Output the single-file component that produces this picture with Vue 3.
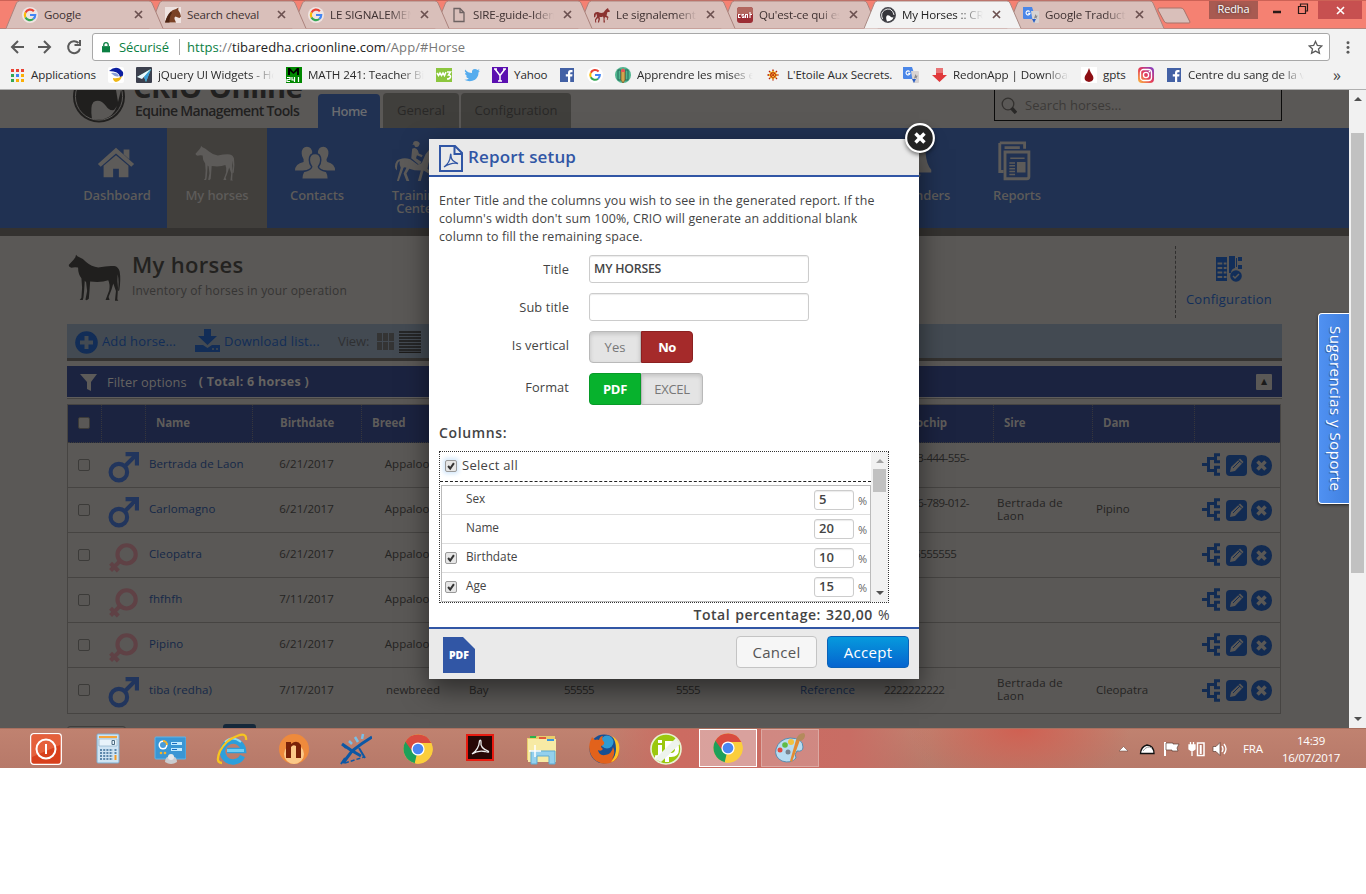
<script setup>
const horsePath = 'M24 2L28 7Q42 12 54 24Q70 38 90 40Q120 34 138 36Q150 38 154 52Q158 75 153 108L149 110Q153 80 148 60Q146 80 149 100L147 135L150 139L140 139L143 110L135 88L130 105L121 128L124 137L112 137L123 108Q126 90 120 78Q100 86 66 82L64 110L62 133L56 138L52 136L57 110L54 84L50 80L48 110L46 130L44 137L35 137L40 130L42 100L40 72Q30 60 30 40Q18 38 10 41L4 38L2 33L16 18L22 10Z'

const translate = '<path d="M0 0h9l4 12H1q-1 0-1-1z" fill="#4a86e8"/><path d="M8 4h7q1 0 1 1v10q0 1-1 1h-5z" fill="#d7d3d3"/><path d="M9 12h4l-2 4z" fill="#2b5fc4"/><path d="M6.600 4.600A2 2 0 1 0 7 6.400H5.200" fill="none" stroke="#fff" stroke-width="1.100"/><path d="M12.500 7l.8 1.800h1.700l-1.400 1.200.6 1.800-1.700-1-1.500 1 .5-1.800" fill="#888"/>'
const google = '<path d="M12.600 3.400A6.100 6.100 0 0 0 2.600 5.100" fill="none" stroke="#ea4335" stroke-width="2.600"/><path d="M2.600 5.100A6.100 6.100 0 0 0 2.600 10.900" fill="none" stroke="#fbbc05" stroke-width="2.600"/><path d="M2.600 10.900A6.100 6.100 0 0 0 11.900 12.700" fill="none" stroke="#34a853" stroke-width="2.600"/><path d="M8 8h6.200A6.100 6.100 0 0 1 11.900 12.700" fill="none" stroke="#4285f4" stroke-width="2.600"/>'
const facebook = '<path d="M1 1h14v14H1z" fill="#4361a5"/><path d="M9 15V9.500H6.800V7.200H9V6Q9 3 11.500 3H13.500v2.200H12Q11.200 5.200 11.200 6v1.200h2.300l-.3 2.300h-2V15z" fill="#fff"/>'
const chrome = '<circle cx="16" cy="16" r="14.500" fill="#fbce3c"/><path d="M16 16L3.500 8.600A14.500 14.500 0 0 0 13 30.200L20 17z" fill="#1da05a"/><path d="M3.400 8.800A14.500 14.500 0 0 1 29.300 10H16L10 18z" fill="#d94b3f"/><path d="M16 16L12.700 30.200A14.500 14.500 0 0 0 29.300 10H16z" fill="#fbce3c"/><circle cx="16" cy="16" r="6.600" fill="#fff"/><circle cx="16" cy="16" r="5.300" fill="#4a86f2"/>'

const icons = {
  google: '<circle cx="8" cy="8" r="8" fill="#fff" opacity=".6"/><g transform="translate(1.300 1.300) scale(.84)">' + google + '</g>',
  googleRound: '<circle cx="8" cy="8" r="8" fill="#fff"/><g transform="translate(1.800 1.800) scale(.78)">' + google + '</g>',
  cheval: '<path d="M0 0h16v16H0z" fill="#fff" opacity=".55"/><path d="M0 15.500Q2 9 5 5.500Q7 2.500 11 2L13.500 0.500L13.200 3L15 6L16 9.500L14.500 11L13 10.500L10.500 9.500Q9 10 9.500 12L11 15.500z" fill="#7a4126"/><path d="M0 15.500Q2 8 6 4.500L7 6Q4 10 4.500 15.500z" fill="#4c2414"/>',
  page: '<path d="M3 1.500h6l4 4v9H3zM9 1.500v4h4" fill="none" stroke="#6d6262" stroke-width="1.300"/>',
  runner: '<path d="M0 7Q1 4.500 4 5Q7 6.500 9.500 5.500Q11 3 12.500 2L14 1L14.500 2.500L16 4L15.300 5L13.500 5L12.500 8.500L14.500 10L13.500 13L12.800 13L13.300 10.800L11 10L10.500 12L11 15.500H9.500L9.500 11L9 9.500Q7 10.500 5.500 9.800L6 12L5 15.500H3.800L4.500 12L4 11L2 13L2.300 15.500H1.200L1 12.500L3 9.500L2.500 7Q1.500 7 1.500 9.500Q.5 11 0 10z" fill="#8b3230"/>',
  quest: '<rect width="16" height="16" rx="3" fill="#9c2d34"/><path d="M0 3Q0 0 3 0H13Q16 0 16 3V7H0z" fill="#b2675f"/><path d="M3.500 7.500h-2v3h2M7 7.500H5v1.500h2v1.500H5M8.500 11V7.500h2V11M13 5v6M15 7.500h-2" fill="none" stroke="#fff" stroke-width="1.100"/>',
  crio: '<circle cx="8" cy="8" r="7.300" fill="#36363b" stroke="#45454b" stroke-width="1.300"/><path d="M7 14.500Q5 9.500 7.500 8.300Q9.500 8 11 10Q12.500 11 13.500 9.500Q13 14 7 14.500z" fill="#fff"/><path d="M2.500 12Q0 6 4.500 3.200Q7 1.500 10 2.200Q13.500 4 14 8" fill="none" stroke="#fff" stroke-width=".9"/>',
  translate,
  apps: '<g fill="#ea4335"><path d="M2 2h3v3H2zM7 2h3v3H7zM12 2h3v3h-3z"/></g><path d="M2 7h3v3H2zM2 12h3v3H2z" fill="#34a853"/><path d="M7 7h3v3H7z" fill="#4285f4"/><path d="M12 7h3v3h-3zM7 12h3v3H7zM12 12h3v3h-3z" fill="#fbaf05"/>',
  jq: '<rect width="16" height="16" rx="1" fill="#3b3f4d"/><path d="M1 10L15 2L10 15L8 10z" fill="#5fcfb2"/><path d="M1 10L15 2L6 12z" fill="#eefaff"/><path d="M15 2L8 10L10 15z" fill="#3d9bd8"/>',
  ball: '<rect width="16" height="16" rx="2" fill="#fff"/><path d="M1 4Q9-3 15 5Q16 10 12 10Q11 4 1 4z" fill="#0c1fa0"/><path d="M3 6Q9 5 11 9Q8 11 3 6z" fill="#8aa0d8"/><path d="M5 11Q10 12 14 9Q13 14 8 15Q5 14 5 11z" fill="#efb714"/>',
  math: '<path d="M0 0h16v16H0z" fill="#080"/><path d="M2 8V1h2l3.500 4L11 1h2v7h-2V4L7.500 7 4 4v4z" fill="#000"/><path d="M1 10.500h3v2H1v2h3M6 10v3h3M8.500 10v5M12.500 10v5" fill="none" stroke="#fff" stroke-width="1.200"/>',
  w3: '<path d="M0 1h16v14H0z" fill="#8cc63e"/><path d="M1 6l1.500 2.500L4 6l1.500 2.500L7 6l1.500 2.500L10 5M11 5h3.500l-2 3Q15 8 14.500 10T11 12" fill="none" stroke="#fff" stroke-width="1.500"/>',
  twitter: '<path d="M1 2.500Q4 6 8 6Q7.500 2 11 2Q12.500 2 13.300 3L15.500 2.300L14.300 4.200L16 3.800L14.500 5.500Q14.500 10 11 12.700Q6 15.500.3 12.800Q3 13 4.800 11.600Q2.500 11.200 2 9.300H3.300Q1 8 1 6L2.400 6.300Q0 4.500 1 2.500z" fill="#55acee"/>',
  yahoo: '<path d="M0 0h16v16H0z" fill="#5a0fb0"/><path d="M3 2l5 6.500L13 2M8 8v6M6 14h4M2 2h3M11 2h3" fill="none" stroke="#fff" stroke-width="1.500"/>',
  facebook,
  pencil: '<circle cx="8" cy="8" r="8" fill="#50b58e"/><path d="M3 3h3v10H3zM10 3h3v10h-3z" fill="none" stroke="#23695a"/><path d="M6 4q2-3 4 0v9l-2 3l-2-3z" fill="#d2a44e" stroke="#795528" stroke-width=".7"/><path d="M6 3q2-3 4 0v2H6z" fill="#e65454"/>',
  star: '<path d="M8 2.500L9.500 5L12 4L11 6.500L13.500 8L11 9.500L12 12L9.500 11L8 13.500L6.500 11L4 12L5 9.500L2.500 8L5 6.500L4 4L6.500 5z" fill="#f2bf27"/><path d="M8 2.500v11M2.500 8h11M4 4l8 8M12 4l-8 8" stroke="#b81b12" stroke-width="1.300" stroke-dasharray="1.500 1"/>',
  redon: '<path d="M5 1h7v7h4L8.500 15L1 8h4z" fill="#e0393b"/><path d="M5 1h7v5H5z" fill="#e97375"/>',
  drop: '<path d="M0 0h16v16H0z" fill="#fff"/><path d="M8 1Q9 5 12 9Q14 14 8 15Q2 14 4 9Q7 5 8 1z" fill="#8d0f14"/>',
  insta: '<defs><linearGradient id="ig" x1="0" y1="1" x2="1" y2="0"><stop offset="0" stop-color="#fdc040"/><stop offset=".5" stop-color="#e23a5c"/><stop offset="1" stop-color="#7a3fd0"/></linearGradient></defs><rect width="16" height="16" rx="4" fill="url(#ig)"/><rect x="2.500" y="2.500" width="11" height="11" rx="3" fill="none" stroke="#fff" stroke-width="1.300"/><circle cx="8" cy="8" r="2.600" fill="none" stroke="#fff" stroke-width="1.300"/><circle cx="11.400" cy="4.600" r=".8" fill="#fff"/>'
}

const tabs = [
  { icon: 'google', text: 'Google' },
  { icon: 'cheval', text: 'Search cheval' },
  { icon: 'google', text: 'LE SIGNALEMENT' },
  { icon: 'page', text: 'SIRE-guide-Identif' },
  { icon: 'runner', text: 'Le signalement d' },
  { icon: 'quest', text: "Qu'est-ce qui est" },
  { icon: 'crio', text: 'My Horses :: CRIO', active: true },
  { icon: 'translate', text: 'Google Traduction' }
]

const bookmarks = [
  { icon: 'apps', text: 'Applications', w: 99 },
  { icon: 'ball', w: 28 },
  { icon: 'jq', text: 'jQuery UI Widgets - Home', w: 150, fade: true },
  { icon: 'math', text: 'MATH 241: Teacher Bingo', w: 150, fade: true },
  { icon: 'w3', w: 28 },
  { icon: 'twitter', w: 28 },
  { icon: 'yahoo', text: 'Yahoo', w: 67 },
  { icon: 'facebook', w: 28 },
  { icon: 'googleRound', w: 28 },
  { icon: 'pencil', text: 'Apprendre les mises en page', w: 150, fade: true },
  { icon: 'star', text: "L'Etoile Aux Secrets.", w: 138 },
  { icon: 'translate', w: 28 },
  { icon: 'redon', text: 'RedonApp | Download', w: 150, fade: true },
  { icon: 'drop', text: 'gpts', w: 57 },
  { icon: 'insta', w: 28 },
  { icon: 'facebook', text: 'Centre du sang de la ville', w: 150, fade: true }
]

const nav = {
  home: '<path d="M3 24L22 7L41 24L38 27L22 13L6 27L3 24zM9 26L22 15L35 26V38H25V29H19V38H9zM30 9h6v10l-6-5z"/>',
  people: '<path d="M7 13Q7 6 12.500 6Q18 6 18 13Q18 16 16 19Q17 22 21 24L17 31H0Q0 24 9 22Q9 20 9 19Q7 16 7 13zM24 13Q24 6 29.500 6Q35 6 35 13Q35 16 33 19Q33 22 34 22Q42 24 42 31H25L21 24Q26 22 26 19Q24 16 24 13z"/><path d="M15 20Q15 13 21 13Q27 13 27 20Q27 24 24.500 27Q25 30 33 32Q35 35 35 40H7Q7 35 9 32Q17 30 17.500 27Q15 24 15 20z" stroke="#203152" stroke-width="1.500"/>',
  rider: '<path d="M19 3Q19 0 22 0Q25 0 26 3L25 5Q24 7 21 6L20 4H18z"/><path d="M18 8Q22 6 24 10L25 13L29 15L28 17L23 15L22 18L28 22L25 25L23 23L17 18z"/><path d="M5 19Q10 17 16 19L24 25L28 23L32 14L36 9L38 11L43 15L42 18L37 17L35 24L34 29L40 34L37 41L35 41L37 35L30 31L27 42H24L27 31Q20 31 15 29L12 34L15 42H12L9 34L12 28Q10 27 9 28L4 42H2L6 28Q4 24 5 21Q2 22 2 31Q0 29 0 27Q0 20 5 19z"/>',
  bell: '<path d="M22 0q10 0 10 12q1 13 6 18v3H5v-3q5-5 6-18Q12 0 22 0zM17 35h10q-2 5-5 5t-5-5z"/>',
  reports: '<path d="M5 2h26v6M5 2v30h4M10 7h16" fill="none" stroke="#5d5b59" stroke-width="3"/><path d="M10.500 11.500h25v26q0 2-2 2h-23z" fill="none" stroke="#5d5b59" stroke-width="3"/><path d="M16 18h15M15 23h6M15 26h6M15 29h6M15 32h6M15 35h6" stroke="#5d5b59" stroke-width="1.500" fill="none"/><path d="M23 22h9v11h-9z"/>'
}

const navItems = [
  { text: 'Dashboard', icon: nav.home },
  { text: 'My horses', horse: true },
  { text: 'Contacts', icon: nav.people },
  { text: 'Training Center', icon: nav.rider },
  { text: '', icon: '' }, { text: '', icon: '' }, { text: '', icon: '' }, { text: '', icon: '' },
  { text: 'Reminders', icon: nav.bell },
  { text: 'Reports', icon: nav.reports }
]

const heads = ['', '', 'Name', 'Birthdate', 'Breed', '', '', '', '', 'Microchip', 'Sire', 'Dam', '']
const horses = [
  { sex: 'm', name: 'Bertrada de Laon', date: '6/21/2017', breed: 'Appaloosa', chip: '222-333-444-555-666', sire: '', dam: '' },
  { sex: 'm', name: 'Carlomagno', date: '6/21/2017', breed: 'Appaloosa', chip: '123-456-789-012-345', sire: 'Bertrada de Laon', dam: 'Pipino' },
  { sex: 'f', name: 'Cleopatra', date: '6/21/2017', breed: 'Appaloosa', chip: '555555555555', sire: '', dam: '' },
  { sex: 'f', name: 'fhfhfh', date: '7/11/2017', breed: 'Appaloosa', chip: '', sire: '', dam: '' },
  { sex: 'f', name: 'Pipino', date: '6/21/2017', breed: 'Appaloosa', chip: '', sire: '', dam: '' },
  { sex: 'm', name: 'tiba (redha)', date: '7/17/2017', breed: 'newbreed', color: 'Bay', a: '55555', b: '5555', ref: 'Reference', chip: '2222222222', sire: 'Bertrada de Laon', dam: 'Cleopatra' }
]
const columns = [
  { name: 'Sex', pct: 5 },
  { name: 'Name', pct: 20 },
  { name: 'Birthdate', pct: 10, check: true },
  { name: 'Age', pct: 15, check: true }
]

const taskbar = [
  '<rect x=".7" y=".7" width="30.600" height="30.600" rx="3" fill="#d8401c" stroke="#fff" stroke-width="1.300"/><path d="M2 2h28v10L2 24z" fill="#ef7650" opacity=".6"/><circle cx="16" cy="16" r="9.500" fill="none" stroke="#fff" stroke-width="2"/><path d="M16 11v10" stroke="#fff" stroke-width="2"/>',
  '<rect x="5" y="1" width="22" height="29" rx="1" fill="#cfe4f3" stroke="#7daed0"/><path d="M7 3h18v2H7z" fill="#f5a63c"/><path d="M7 6h18v7H7z" fill="#e8f3fa" stroke="#80a9c5" stroke-width=".6"/><path d="M20 7.500h2.500v4H20z" fill="none" stroke="#4a6b82"/><path d="M8 17h13M8 20h13M8 23h13M8 26h13" stroke="#5b87ab" stroke-width="2" stroke-dasharray="2 1.200"/><path d="M22.500 17h2M22.500 20h2" stroke="#5b87ab" stroke-width="2"/><path d="M22.500 22h2v5h-2z" fill="#f39a24"/>',
  '<rect x="1" y="4" width="31" height="22" rx="1" fill="#3a96d4" stroke="#5fb4e8"/><circle cx="9" cy="12" r="4.500" fill="#fff"/><path d="M9 12V7a5 5 0 0 1 5 5z" fill="#f5b42c"/><circle cx="9" cy="12" r="3" fill="#4a9cd9"/><path d="M17 9h11v3H17zM17 15h11v3H17z" fill="#bfeaff"/><path d="M18 10h5v1h-5zM18 16h5v1h-5z" fill="#1a6cc0"/><circle cx="7" cy="20" r="1.300" fill="#f5b42c"/><circle cx="11" cy="20" r="1.300" fill="#f5b42c"/><path d="M11 29q0-6 6-6t6 6q-6 4-12 0z" fill="#c9ccd0"/><circle cx="17" cy="24" r="3" fill="#e5e7e9"/>',
  '<path d="M26.500 23A10.500 10.500 0 1 1 27.500 17.500H11" fill="none" stroke="#2c9fdc" stroke-width="5.500"/><path d="M9 9Q16 2 25 9" fill="none" stroke="#8fdcf7" stroke-width="2"/><path d="M11 17.500h17" stroke="#6fcdf3" stroke-width="3"/><path d="M6 30Q-1 30 4 18Q10 7 21 3Q31-1 30 7" fill="none" stroke="#f7c520" stroke-width="2.300"/>',
  '<circle cx="16" cy="16" r="15" fill="#ee8a3c"/><circle cx="16" cy="21" r="10" fill="#fbc988"/><path d="M8 9h5v2q6-5 10 1v13h-5V13q-3-2-5 1v11H8z" fill="#7a2208"/>',
  '<path d="M2 11Q10 17 21 23M3 30L12 18Q22 10 32 4" fill="none" stroke="#0d58a5" stroke-width="3"/><path d="M3 12l3 3M1 31l4-6M19 15l6 10" stroke="#0d58a5" stroke-width="2" fill="none"/><path d="M5 30L24 24" stroke="#0d58a5" stroke-width="1.500" stroke-dasharray="4 2"/><path d="M15 4l3 5M23 1l-1 5M9 8l3 3" stroke="#79bfe8" stroke-width="2.500"/>',
  chrome,
  '<path d="M2 1h28v27H2z" fill="#e81b10"/><path d="M4 3h24v23H4z" fill="#270806"/><path d="M8 21Q15 16 15.500 8Q17 6 17 9Q16 15 24 18Q26 20 21 18.500Q14 17 8 21z" fill="none" stroke="#eee" stroke-width="1.300"/>',
  '<path d="M1 5h8l2-2h18v24H1z" fill="#e9ce6c"/><path d="M2 6h28v23H2z" fill="#f7eaa4"/><path d="M4 3h6v2H4z" fill="#28b34b"/><path d="M13 4h7v2h-7z" fill="#e25a3c"/><path d="M21 6h7v2h-7z" fill="#3a97df"/><path d="M5 18h24v13h-6v-8H11v8H5z" fill="#94d0ed" stroke="#5eabd1"/><path d="M9 12v12M3 18h12" stroke="#fff" stroke-width="1.500"/>',
  '<circle cx="16" cy="16" r="14.500" fill="#174f93"/><circle cx="19" cy="9" r="6.500" fill="#2f9bd2"/><path d="M2 9L4 4L7 7Q9 6 11 7Q12 3 15 3Q13 6 16 9Q17 12 13 13Q13 15 15 16Q13 19 10 17Q11 23 17 22Q24 21 25 14Q28 20 24 26Q29 22 30 14Q34 26 22 30Q9 33 3 22Q0 15 2 9z" fill="#e2621b"/><path d="M24 3Q33 8 31 18Q30 27 23 29Q28 23 28 16Q28 8 24 3z" fill="#fcc527"/>',
  '<circle cx="16" cy="16" r="15" fill="#9bc80e" stroke="#e9f2d3" stroke-width="1.600"/><path d="M10 7v3M10 12v9q0 4-5 3M17 29V10h4q6 0 6 6t-6 6h-4" fill="none" stroke="#fff" stroke-width="4"/><path d="M5 26L26 5L30 11L11 29z" fill="#eef3ed"/>',
  chrome,
  '<path d="M16 6Q29 6 29 15Q29 20 23 19Q20 22 22 26Q17 32 8 29Q0 25 2 17Q5 7 16 6z" fill="#b8dcf1" stroke="#578cb0"/><circle cx="17" cy="10" r="3" fill="#f1c23e"/><circle cx="11" cy="13" r="2.800" fill="#60bb46"/><circle cx="6" cy="18" r="2.500" fill="#e24b3e"/><circle cx="14" cy="20" r="2.500" fill="#77848f"/><path d="M26 8L18 30L16 29L22 8z" fill="#e28b33"/><path d="M22 8Q24 1 30 1Q33 5 27 9z" fill="#b48a5c"/>'
]
</script>

<template>
  <div class="screen">
    <div class="titlebar">
      <div v-for="(t, i) in tabs" :key="i" class="tab" :class="{ active: t.active }" :style="{ zIndex: t.active ? 20 : 10 - i }">
        <svg class="tab-shape" viewBox="0 0 158 29"><path d="M0 28.500L10.500 3Q11.500 1 13.500 1H143Q145 1 146 3L157 28.500" /></svg>
        <svg class="i16" viewBox="0 0 16 16" v-html="icons[t.icon]"></svg>
        <span class="tab-text">{{ t.text }}</span>
        <svg class="tab-x" viewBox="0 0 9 9"><path d="M1 1l7 7M8 1l-7 7" /></svg>
      </div>
      <svg class="newtab" viewBox="0 0 36 18"><path d="M2 1H24Q26 1 27 3L33 15Q33 16 32 16H10Q8 16 7 14L1 3Q1 1 2 1z" /></svg>
      <div class="win">
        <span class="user">Redha</span>
        <svg class="wmin" viewBox="0 0 48 19"><path d="M3 12h8" stroke-width="2.500" /><path d="M28.500 6.500h7v7h-7zM30.500 6v-2h7v7h-2" fill="none" stroke-width="1.200" /></svg>
        <span class="wclose"><svg viewBox="0 0 9 9"><path d="M1 1l7 7M8 1l-7 7" /></svg></span>
      </div>
    </div>

    <div class="urlbar">
      <svg class="nav-arrows" viewBox="0 0 74 16">
        <path d="M14 8H2M8 2L2 8l6 6M28 8h12M34 2l6 6-6 6M68.500 4A6 6 0 1 0 70 9.500M70 1v5h-5.500" />
      </svg>
      <div class="omni">
        <svg class="lock" viewBox="0 0 9 12"><path d="M0 5h9v7H0z" /><path d="M2 5V3.500Q2 1 4.500 1T7 3.500V5" fill="none" stroke="#0b8043" stroke-width="1.500" /></svg>
        <span class="secure">Sécurisé</span>
        <span class="sep"></span>
        <span class="url"><span class="green">https</span>://<span class="dark">tibaredha.crioonline.com</span>/App/#Horse</span>
        <svg class="fav" viewBox="0 0 16 16"><path d="M8 1.500l2 4.300 4.700.5-3.500 3.200 1 4.700L8 11.800l-4.200 2.400 1-4.700L1.300 6.300 6 5.800z" /></svg>
      </div>
      <svg class="dots" viewBox="0 0 4 14"><circle cx="2" cy="2" r="1.600" /><circle cx="2" cy="7" r="1.600" /><circle cx="2" cy="12" r="1.600" /></svg>
    </div>

    <div class="bookmarks">
      <div v-for="(b, i) in bookmarks" :key="i" class="bm" :style="{ width: b.w + 'px' }">
        <svg class="i16" viewBox="0 0 16 16" v-html="icons[b.icon]"></svg>
        <span v-if="b.text" class="bm-text" :class="{ fade: b.fade }">{{ b.text }}</span>
      </div>
      <span class="more">»</span>
    </div>

    <div class="viewport">
      <div class="page">
        <header class="head">
          <svg class="logo" viewBox="0 0 54 34">
            <circle cx="28" cy="6.500" r="26" fill="#201f1e" />
            <circle cx="28" cy="6.500" r="23.600" fill="none" stroke="#5a5856" stroke-width="1" />
            <path d="M21 29Q19 16 22.500 12Q29 8 35 16Q38 21 43 20L46 16Q42 27 33 29Q26 30 21 29z" fill="#5a5856" />
            <path d="M45 0L47 12L50 0z" fill="#5a5856" />
          </svg>
          <div class="brand"><b>CRIO Online</b><span>Equine Management Tools</span></div>
          <div class="ptab home">Home</div>
          <div class="ptab general">General</div>
          <div class="ptab conf">Configuration</div>
          <div class="search">
            <svg viewBox="0 0 16 17"><circle cx="7" cy="7" r="5.800" fill="none" stroke="#33312f" stroke-width="1.300" /><path d="M10.500 11L15 16" stroke="#292827" stroke-width="3.500" /></svg>
            Search horses...
          </div>
        </header>
        <nav class="nav">
          <div v-for="(n, i) in navItems" :key="i" class="nitem" :class="{ sel: n.horse }">
            <svg v-if="n.horse" class="nhorse" viewBox="0 0 158 140"><path :d="horsePath" /></svg>
            <svg v-else class="nicon" viewBox="0 0 44 44" v-html="n.icon"></svg>
            <span>{{ n.text }}</span>
          </div>
        </nav>
        <section class="title">
          <svg class="thorse" viewBox="0 0 158 140"><path :d="horsePath" /></svg>
          <div class="ttext"><h1>My horses</h1><p>Inventory of horses in your operation</p></div>
          <div class="config">
            <svg viewBox="0 0 26 26"><path d="M0 1h11v24H0zM22 1h4v4h-4zM22 9h4v4h-4z" /><path d="M1.500 7.500h9M1.500 12h9M1.500 16.500h9M1.500 21h9" stroke="#5a5856" stroke-width="2" /><path d="M7 5v19" stroke="#122e59" stroke-width="1.500" /><path d="M13 0h6v12q-4 1-4 5h-2zM20 2h1v9h-1z" /><circle cx="20" cy="20" r="5.800" /><path d="M17 20l2 2 4-4" stroke="#5a5856" stroke-width="1.500" fill="none" /></svg>
            <span>Configuration</span>
          </div>
        </section>
        <div class="tools">
          <svg class="plus" viewBox="0 0 23 23"><circle cx="11.500" cy="11.500" r="11.300" /><path d="M11.500 5v13M5 11.500h13" stroke="#434a52" stroke-width="4" /></svg>
          <span class="add">Add horse...</span>
          <svg class="down" viewBox="0 0 25 23"><path d="M9 0h7v7h6l-9.500 9L3 7h6z" /><path d="M0 16h8l4.500 3 4.500-3h8v7H0z" /><path d="M17 20h2M21 20h2" stroke="#434a52" stroke-width="1.500" /></svg>
          <span class="dl">Download list...</span>
          <span class="view">View:</span>
          <svg class="gridi" viewBox="0 0 17 17"><path d="M0 0h5v8H0zM6 0h5v8H6zM12 0h5v8h-5zM0 9h5v8H0zM6 9h5v8H6zM12 9h5v8h-5z" /></svg>
          <svg class="lines" viewBox="0 0 22 22"><path d="M0 1h22M0 4h22M0 7h22M0 10h22M0 13h22M0 16h22M0 19h22M0 21.500h22" stroke="#1c1b1a" stroke-width="1.400" /></svg>
        </div>
        <div class="filter">
          <svg viewBox="0 0 17 18"><path d="M0 0h17l-6 8v9l-4-2V8z" /></svg>
          <span>Filter options</span><b>( Total: 6 horses )</b>
          <i>▲</i>
        </div>
        <div class="table">
          <div class="row hrow">
            <div v-for="(h, i) in heads" :key="i" :class="{ ck: i === 0 }"><span v-if="i === 0" class="box"></span>{{ h }}</div>
          </div>
          <div v-for="h in horses" :key="h.name" class="row">
            <div class="ck"><span class="box"></span></div>
            <div class="sex">
              <svg v-if="h.sex === 'm'" viewBox="0 0 30 30"><path d="M16.500 13.500L26 4M17 2h11v11" fill="none" stroke="#21355d" stroke-width="4" /><circle cx="10.500" cy="19.500" r="8" fill="none" stroke="#21355d" stroke-width="4" /></svg>
              <svg v-else viewBox="0 0 30 30"><path d="M12 18L2.500 27.500M2.500 20.500L10 28" fill="none" stroke="#5f4145" stroke-width="4" /><circle cx="18" cy="12" r="8.800" fill="none" stroke="#5f4145" stroke-width="4" /></svg>
            </div>
            <div class="link">{{ h.name }}</div>
            <div class="mid">{{ h.date }}</div>
            <div class="mid">{{ h.breed }}</div>
            <div>{{ h.color }}</div>
            <div class="num">{{ h.a }}</div>
            <div class="num">{{ h.b }}</div>
            <div class="link">{{ h.ref }}</div>
            <div class="num chip">{{ h.chip }}</div>
            <div class="sire">{{ h.sire }}</div>
            <div>{{ h.dam }}</div>
            <div class="acts">
              <svg class="tree" viewBox="0 0 18 23"><path d="M0 11.500h6M12 5.500H6.500v12H12M18 1.800h-4.500v7H18M18 14.200h-4.500v7H18" fill="none" stroke="#122b52" stroke-width="3" /></svg>
              <svg class="edit" viewBox="0 0 21 21"><rect width="21" height="21" rx="4" /><path d="M4 17l1-5L14 3.500l3.500 3.500L9 16z" fill="#5a5856" /><path d="M7 13l7-7M12.500 5l3.500 3.500" stroke="#122b52" /></svg>
              <svg class="del" viewBox="0 0 21 21"><circle cx="10.500" cy="10.500" r="10.500" /><path d="M6.500 6.500l8 8M14.500 6.500l-8 8" stroke="#5a5856" stroke-width="3.500" /></svg>
            </div>
          </div>
        </div>
        <div class="pager"><span class="p1"></span><span class="p2"></span></div>

        <div class="modal">
          <div class="mhead">
            <svg viewBox="0 0 24 28"><path d="M1 1h15l7 7v18H1zM15.500 1v8H23" fill="none" stroke="#3156a5" stroke-width="2" /><path d="M5 22Q11 18 11.500 10Q12 8 12 11Q12 16 19 18.500Q13 17 5 22z" fill="none" stroke="#3156a5" stroke-width="1.300" /></svg>
            <h2>Report setup</h2>
          </div>
          <div class="mbody">
            <p class="intro"><span>Enter Title and the columns you wish to see in the generated report. If the</span><span>column's width don't sum 100%, CRIO will generate an additional blank</span><span>column to fill the remaining space.</span></p>
            <div class="field"><label>Title</label><div class="inp">MY HORSES</div></div>
            <div class="field"><label>Sub title</label><div class="inp"></div></div>
            <div class="field tog"><label>Is vertical</label><div class="switch"><span class="off l">Yes</span><span class="no">No</span></div></div>
            <div class="field tog"><label>Format</label><div class="switch"><span class="pdf">PDF</span><span class="off r">EXCEL</span></div></div>
            <h3>Columns:</h3>
            <div class="list">
              <div class="lmain">
                <div class="all"><span class="cbx glow"><svg viewBox="0 0 12 12"><path d="M2.500 6l2.500 3 4.500-6.500" /></svg></span>Select all</div>
                <div class="lrows">
                  <div v-for="c in columns" :key="c.name" class="lrow">
                    <span v-if="c.check" class="cbx"><svg viewBox="0 0 12 12"><path d="M2.500 6l2.500 3 4.500-6.500" /></svg></span>
                    <span v-else class="cgap"></span>
                    <span class="cname">{{ c.name }}</span>
                    <span class="pct">{{ c.pct }}</span><span class="ps">%</span>
                  </div>
                </div>
              </div>
              <div class="lscroll"><i class="up dimmed"></i><b></b><i class="dn"></i></div>
            </div>
            <div class="total"><b>Total percentage: 320,00</b> %</div>
          </div>
          <div class="mfoot">
            <svg viewBox="0 0 32 36"><path d="M0 0h20l12 12v24H0z" /><text x="16" y="21.500">PDF</text></svg>
            <span class="btn cancel">Cancel</span><span class="btn accept">Accept</span>
          </div>
          <svg class="close" viewBox="0 0 30 30"><circle cx="15" cy="15" r="13" fill="#222" stroke="#fff" stroke-width="2" /><path d="M10.800 10.800l8.400 8.400M19.200 10.800l-8.400 8.400" stroke="#fff" stroke-width="3.200" /></svg>
        </div>
        <div class="support">Sugerencias y Soporte</div>
      </div>
      <div class="scroll"><i class="up"></i><b></b><i class="dn"></i></div>
    </div>

    <div class="taskbar">
      <div v-for="(t, i) in taskbar" :key="i" class="task" :class="{ on: i === 11, half: i === 12 }"><svg viewBox="0 0 32 32" v-html="t"></svg></div>
      <div class="tray">
        <svg viewBox="0 0 112 20">
          <path d="M0 12L4.500 7.500L9 12z" fill="#fff" stroke="#5c4038" stroke-width=".5" />
          <path d="M21.500 14.500Q22 7.500 28 6Q35 7 35 14.500z" fill="#fff" stroke="#111" stroke-width="1.300" /><path d="M24 12q4-6 9-3" stroke="#999" fill="none" />
          <path d="M46 3v14" stroke="#fff" stroke-width="2" /><path d="M47 4h7v1h6l-2 4 1 3h-6v-1h-6z" fill="#fff" stroke="#5c4038" stroke-width=".7" />
          <path d="M70 6h6v4q-3 3-6 0zM71.500 3v3M74.500 3v3M73 11v6" fill="#fff" stroke="#fff" stroke-width="1.300" /><rect x="78.500" y="4" width="6.500" height="12.500" fill="#b87766" stroke="#fff" stroke-width="1.500" /><path d="M80.700 6h2v9h-2z" fill="#fff" />
          <path d="M94 7.500h3l4-4v13l-4-4h-3z" fill="#fff" stroke="#5c4038" stroke-width=".7" /><path d="M103 7q2 3 0 6M105 5q4 5 0 10" fill="none" stroke="#fff" stroke-width="1.300" />
        </svg>
        <span class="lang">FRA</span>
        <span class="clock">14:39<br />16/07/2017</span>
      </div>
    </div>
  </div>
</template>

<style>
body { background: #fff; }
</style>
<style scoped>
* { box-sizing: border-box; }
.screen { width: 1366px; height: 894px; overflow: hidden; font-family: "Open Sans", "Noto Sans", sans-serif; background: #fff; white-space: nowrap; }
.i16 { width: 16px; height: 16px; flex: none; }

.titlebar { height: 29px; background: #f58172; border-top: 1px solid #cd6256; border-bottom: 1px solid #b5837c; display: flex; padding-left: 6px; position: relative; }
.tab { width: 157px; height: 29px; margin: -1px -14px 0 0; flex: none; position: relative; display: flex; align-items: center; padding-left: 16px; }
.tab-shape { position: absolute; left: 0; top: 0; width: 158px; height: 29px; }
.tab-shape path { fill: #d9bfba; stroke: #ab837d; stroke-width: 1; }
.active .tab-shape path { fill: #f2f2f2; stroke: #a98983; }
.tab .i16, .tab-text, .tab-x { position: relative; }
.tab-text { width: 83px; margin-left: 6px; font-size: 11.600px; letter-spacing: -.15px; color: #3f3232; overflow: hidden; -webkit-mask-image: linear-gradient(90deg, #000 60px, transparent 81px); }
.tab:first-child .tab-text, .tab:nth-child(2) .tab-text { -webkit-mask-image: none; }
.active .tab-text { color: #222; -webkit-mask-image: linear-gradient(90deg, #000 54px, transparent 81px); }
.tab-x { width: 9px; height: 9px; margin-left: 7px; }
.tab-x path { stroke: #6c5150; stroke-width: 1.700; }
.newtab { width: 36px; height: 18px; margin: 6px 0 0 7px; position: relative; z-index: 30; }
.newtab path { fill: #d9bfba; stroke: #a7736b; }
.win { margin-left: auto; display: flex; height: 18px; }
.user { width: 49px; background: #a85a51; color: #fff; font-size: 11px; line-height: 16px; text-align: center; text-shadow: 0 0 3px #333; letter-spacing: -.1px; }
.wmin { width: 48px; height: 19px; margin-left: 12px; margin-top: -1px; }
.wmin path { stroke: #2a1a18; }
.wclose { width: 44px; margin-right: 4px; background: #c75050; display: flex; align-items: center; justify-content: center; }
.wclose svg { width: 9px; }
.wclose path { stroke: #fff; stroke-width: 1.600; }

.urlbar { height: 36px; background: #f2f2f2; display: flex; align-items: center; padding-left: 10px; }
.nav-arrows { width: 74px; height: 16px; flex: none; }
.nav-arrows path { fill: none; stroke: #5a5a5a; stroke-width: 2; }
.omni { margin-left: 8px; width: 1238px; height: 28px; background: #fff; border: 1px solid #a8a8a8; border-radius: 3px; display: flex; align-items: center; font-size: 13px; padding-left: 9px; }
.lock { width: 8px; height: 12px; fill: #0b8043; }
.secure { color: #0b8043; margin-left: 9px; width: 52px; letter-spacing: -.1px; }
.sep { width: 1px; height: 16px; background: #aaa; margin: 0 7px 0 8px; }
.url { color: #777; letter-spacing: .08px; }
.green { color: #0b8043; }
.dark { color: #222; }
.fav { width: 15px; height: 15px; margin-left: auto; margin-right: 6px; }
.fav path { fill: none; stroke: #5a5a5a; stroke-width: 1.400; }
.dots { width: 4px; height: 13px; margin-left: 16px; fill: #5a5a5a; }
.bookmarks { height: 25px; background: #f2f2f2; border-bottom: 1px solid #b0b0b0; display: flex; align-items: center; padding-left: 9px; font-size: 11.600px; color: #2b2b2b; padding-bottom: 5px; }
.bm { display: flex; align-items: center; flex: none; }
.bm-text { margin-left: 6px; letter-spacing: -.1px; }
.fade { width: 117px; overflow: hidden; -webkit-mask-image: linear-gradient(90deg, #000 92px, transparent 116px); }
.more { margin-left: 17px; font-size: 16px; line-height: 16px; color: #444; }

.viewport { display: flex; height: 638px; }
.page { width: 1349px; height: 638px; position: relative; overflow: hidden; background: #5a5856; }
.head { height: 38px; display: flex; padding-left: 71px; }
.logo { width: 54px; height: 34px; }
.brand { width: 180px; margin-left: 8px; margin-top: -23px; display: flex; flex-direction: column; color: #21201f; }
.brand b { font-size: 29px; line-height: 39px; letter-spacing: -.4px; height: 35px; }
.brand span { font-size: 14px; line-height: 18px; margin-left: 2px; font-weight: 600; letter-spacing: -.65px; }
.ptab { border-radius: 4px 4px 0 0; text-align: center; font-size: 13px; letter-spacing: 0; }
.home { margin-left: 5px; margin-top: 4px; width: 62px; background: #203152; color: #6a6c70; font-weight: 600; line-height: 35px; letter-spacing: -.5px; }
.general { margin-left: 3px; margin-top: 3px; width: 76px; background: #403f3c; color: #292827; line-height: 34px; }
.conf { margin-left: 2px; margin-top: 3px; width: 110px; background: #403f3c; color: #292827; line-height: 34px; }
.search { margin-left: 423px; width: 288px; height: 31px; border: 1px solid #0b0b0b; border-top: 0; display: flex; align-items: center; color: #3c3a38; font-size: 13px; letter-spacing: .05px; padding-left: 6px; }
.search svg { width: 16px; height: 17px; margin-right: 8px; }
.nav { height: 108px; border-bottom: 8px solid #343230; background: #203152; display: flex; padding-left: 67px; }
.nitem { width: 100px; height: 100px; display: flex; flex-direction: column; align-items: center; color: #5d5b59; fill: #5d5b59; font-size: 13px; line-height: 13px; letter-spacing: -.15px; white-space: normal; text-align: center; font-weight: 600; padding-top: 13px; }
.nitem > span { max-width: 70px; }
.sel { background: #413f3c; }
.nicon { width: 42px; height: 42px; margin: 0 2px 6px 0; }
.nhorse { width: 40px; height: 36px; margin: 4px 0 8px -4px; }
.title { height: 88px; display: flex; padding: 10px 67px 0 68px; }
.thorse { width: 53px; height: 47px; margin-top: 8px; fill: #201f1e; }
.ttext { margin-left: 11px; }
h1 { font-size: 22px; line-height: 30px; margin: 3px 0 0; color: #232220; font-weight: 600; letter-spacing: .3px; }
.ttext p { margin: 3px 0 0; font-size: 12px; line-height: 18px; color: #363534; letter-spacing: .18px; }
.config { margin-left: auto; width: 107px; height: 72px; border-left: 1px dashed #302f2e; display: flex; flex-direction: column; align-items: center; color: #122e59; font-size: 13px; letter-spacing: .25px; padding-top: 10px; }
.config svg { width: 26px; height: 26px; fill: #122e59; margin-bottom: 8px; }
.config span { line-height: 18px; }
.tools { margin-left: 67px; width: 1215px; height: 37px; background: #434a52; border-bottom: 3px solid #343230; display: flex; align-items: center; padding-left: 8px; color: #122d57; font-size: 13px; }
.tools svg { flex: none; fill: #122d57; }
.plus { width: 23px; height: 23px; margin-top: 3px; }
.add { margin-left: 4px; width: 93px; letter-spacing: .15px; }
.down { width: 25px; height: 23px; margin-top: -1px; }
.dl { margin-left: 4px; width: 114px; letter-spacing: .2px; }
.view { width: 39px; color: #2f3032; letter-spacing: -.1px; }
.tools .gridi { width: 17px; height: 17px; fill: #343434; margin-top: 1px; }
.lines { width: 22px; height: 22px; margin-left: 5px; margin-top: 1px; }
.filter { margin: 5px 0 0 67px; width: 1215px; height: 31px; background: #1b2340; box-shadow: 0 1px #5f5d5b, 0 2px #454341; display: flex; align-items: center; padding-left: 14px; color: #666461; font-size: 12.800px; letter-spacing: .1px; }
.filter svg { width: 17px; height: 18px; fill: #5d5b59; margin-right: 9px; margin-left: -1px; margin-top: 2px; }
.filter span { margin-left: 1px; }
.filter b { margin-left: 12px; font-size: 12.500px; letter-spacing: .25px; }
.filter i { margin-left: auto; margin-right: 10px; width: 16px; height: 16px; background: #5a5856; border-radius: 1px; font: 8px/15px "DejaVu Sans", sans-serif; color: #1b1b1b; text-align: center; letter-spacing: 0; }
.table { margin: 7px 0 0 67px; width: 1214px; border: 1px solid #464442; }
.row { height: 45px; display: grid; grid-template-columns: 33px 44px 107px 109px 104px 95px 112px 124px 84px 113px 99px 102px 86px; border-bottom: 1px solid #464442; font-size: 11.500px; line-height: 13px; color: #252423; align-items: center; }
.row:last-child { border-bottom: 0; }
.row > div { padding: 0 0 3px 4px; min-width: 0; white-space: normal; letter-spacing: 0; }
.row .ck { padding: 0 0 1px 10px; }
.row > .num { letter-spacing: -.55px; }
.row > .chip { padding-right: 14px; }
.box { display: block; width: 12px; height: 12px; border: 1px solid #3c3b39; border-radius: 2px; background: #595755; }
.hrow { height: 38px; background: #1b2340; border-bottom: 1px dotted #3c3b39; color: #5e5c5a; font-weight: 700; font-size: 11.500px; }
.hrow > div { height: 37px; line-height: 36px; padding: 0 0 0 11px; margin-right: -1px; border-right: 1px dotted #36363c; letter-spacing: -.1px; }
.hrow > div:last-child { margin-right: 0; }
.hrow > div:last-child, .hrow > div:nth-child(n+5):nth-child(-n+9) { border-right: 0; }
.hrow > div:nth-child(4) { padding-left: 28px; }
.hrow .ck { padding-top: 12px; }
.hrow .box { background: #5a5856; }
.row > .sex { padding: 4px 0 0 7px; }
.sex svg { width: 31px; height: 31px; display: block; }
.row > .link { color: #152848; letter-spacing: .1px; }
.row > .mid { text-align: center; padding-left: 0; }
.row > .sire { letter-spacing: .2px; padding-right: 20px; }
.row > .acts { display: flex; align-items: center; padding: 0 0 0 8px; }
.acts svg { fill: #122b52; flex: none; }
.tree { width: 18px; height: 23px; margin-top: -1px; }
.edit { width: 21px; height: 21px; margin-left: 6px; }
.del { width: 21px; height: 21px; margin-left: 4px; }
.pager { display: flex; margin: 10px 0 0 67px; gap: 97px; }
.p1 { width: 59px; height: 6px; border: 1px solid #403f3d; margin-top: 2px; border-radius: 3px; }
.p2 { width: 33px; height: 8px; background: #15283a; border-radius: 3px; }

.modal { position: absolute; left: 429px; top: 49px; width: 490px; height: 540px; background: #fff; box-shadow: 0 10px 25px rgba(0, 0, 0, .5); color: #444; display: flex; flex-direction: column; }
.mhead { height: 38px; background: #e9e9e9; border-bottom: 2px solid #3156a5; display: flex; padding-left: 10px; flex: none; }
.mhead svg { width: 24px; height: 28px; margin-top: 6px; }
h2 { margin: 0 0 0 5px; color: #3156a5; font-size: 17px; line-height: 36px; font-weight: 600; letter-spacing: .15px; }
.mbody { height: 450px; padding: 15px 30px 0 10px; display: flex; flex-direction: column; }
.intro { margin: 0 0 9px; font-size: 12.400px; line-height: 18px; display: flex; flex-direction: column; letter-spacing: .14px; }
.field { display: flex; height: 28px; margin-bottom: 10px; }
.field label { width: 130px; text-align: right; font-size: 12.800px; line-height: 29px; margin-right: 20px; letter-spacing: .1px; }
.inp { width: 220px; border: 1px solid #ccc; border-radius: 3px; box-shadow: inset 0 1px 1px rgba(0, 0, 0, .08); font-size: 12.300px; line-height: 26px; padding-left: 4px; font-weight: 600; letter-spacing: -.2px; color: #444; }
.tog { height: 32px; }
.switch { display: flex; font-size: 13px; line-height: 31px; text-align: center; }
.switch span { border: 1px solid; width: 52px; }
.switch .off { background: #e4e4e4; border-color: #b9b9b9; color: #777; box-shadow: inset 0 2px 4px rgba(0, 0, 0, .15); }
.switch .l { border-radius: 4px 0 0 4px; }
.switch .r { border-radius: 0 4px 4px 0; width: 62px; font-size: 13px; letter-spacing: -.3px; }
.switch .no { background: #a52a2a; border-color: #8b2020; color: #fff; font-weight: 700; border-radius: 0 4px 4px 0; letter-spacing: -.5px; }
.switch .pdf { background: #07b22d; border-color: #079a28; color: #fff; font-weight: 700; border-radius: 4px 0 0 4px; font-size: 13px; letter-spacing: -.3px; }
h3 { margin: 8px 0 9px; font-size: 14px; line-height: 19px; font-weight: 600; letter-spacing: .65px; }
.list { height: 152px; border: 1px dotted #333; display: flex; width: 450px; flex: none; overflow: hidden; }
.lmain { width: 431px; padding-right: 0; }
.all { height: 30px; border-bottom: 1px dashed #222; display: flex; align-items: center; font-size: 13px; line-height: 16px; padding-left: 5px; padding-bottom: 3px; letter-spacing: .3px; }
.all .cbx { margin-right: 5px; margin-top: 1px; }
.lrows { margin: 3px 0 0 1px; border: 1px solid #bbb; border-bottom: 0; }
.lrow { height: 29px; border-bottom: 1px solid #ddd; display: flex; align-items: center; padding-left: 3px; font-size: 11.800px; }
.lrow:last-child { border-bottom: 1px solid #bbb; }
.cbx, .cgap { width: 12px; height: 12px; flex: none; }
.cbx { border: 1px solid #999; border-radius: 2px; background: #e6e6e6; }
.cbx svg { width: 10px; height: 10px; display: block; }
.cbx path { fill: none; stroke: #333; stroke-width: 2.400; }
.glow { box-shadow: 0 0 4px 2px #d4e8fb; }
.cname { margin-left: 9px; margin-top: -4px; }
.pct { margin-left: auto; width: 40px; height: 20px; border: 1px solid #ccc; border-radius: 3px; font-size: 13px; font-weight: 600; line-height: 17px; padding-left: 4px; box-shadow: inset 0 1px 1px rgba(0, 0, 0, .08); }
.ps { width: 16px; padding-left: 4px; font-size: 11px; letter-spacing: -1px; color: #666; }
.lscroll { width: 17px; background: #f1f1f1; display: flex; flex-direction: column; align-items: center; }
.lscroll b { width: 13px; height: 23px; background: #c1c1c1; margin-top: 6px; }
i.up, i.dn { width: 0; height: 0; border: 4px solid transparent; }
i.up { border-top: 0; border-bottom-color: #505050; }
i.dn { border-bottom: 0; border-top-color: #505050; }
.lscroll .up { margin-top: 7px; border-bottom-color: #a3a3a3; }
.lscroll .dn { margin-top: auto; margin-bottom: 7px; }
.total { text-align: right; font-size: 14px; line-height: 18px; margin-top: 3px; letter-spacing: .5px; word-spacing: 1px; margin-right: -1px; }
.total b { font-weight: 600; }
.mfoot { height: 52px; background: #eaeaea; border-top: 2px solid #3156a5; display: flex; padding: 7px 10px 0 15px; }
.mfoot svg { width: 32px; height: 36px; fill: #3156a5; margin-right: auto; margin-top: 1px; margin-left: -1px; }
.mfoot text { font: 800 10.500px "Open Sans", sans-serif; fill: #fff; text-anchor: middle; }
.btn { height: 32px; border-radius: 4px; line-height: 31px; text-align: center; font-size: 15px; border: 1px solid #c4c4c4; }
.cancel { width: 81px; background: #f6f6f6; color: #555; margin-right: 10px; letter-spacing: .3px; }
.accept { width: 82px; color: #fff; border-color: #0a62b8; background: linear-gradient(#069add, #0564cf); letter-spacing: .3px; }
.close { position: absolute; left: 475px; top: -17px; width: 32px; height: 32px; filter: drop-shadow(0 2px 2px rgba(0, 0, 0, .5)); }
.support { position: absolute; right: 0; top: 223px; width: 31px; height: 191px; border: 1px solid #fff; border-right: 0; border-radius: 4px 0 0 4px; background: linear-gradient(90deg, #5091f2, #4080df); color: #fff; writing-mode: vertical-rl; text-align: center; font-size: 15px; line-height: 26px; letter-spacing: .5px; text-shadow: 1px 1px #3463ae; box-shadow: 0 1px 3px #222; }
.scroll { width: 17px; background: #f1f1f1; display: flex; flex-direction: column; align-items: center; }
.scroll .up { margin-top: 7px; }
.scroll b { width: 13px; height: 440px; background: #c1c1c1; margin-top: 32px; }
.scroll .dn { margin-top: auto; margin-bottom: 7px; }

.taskbar { height: 40px; border-top: 1px solid #a9705f; background: radial-gradient(ellipse 110px 60px at 1020px 0, #d06052, transparent), linear-gradient(90deg, transparent 600px, #cc6b61 680px, #c86d64 850px, transparent 930px), linear-gradient(#c08270, #b77969); display: flex; padding-left: 15px; }
.task { width: 62px; height: 39px; display: flex; align-items: center; justify-content: center; }
.task svg { width: 32px; height: 32px; }
.on, .half { width: 58px; margin: 0 2px; height: 38px; border: 1px solid #fff; background: rgba(230, 205, 205, .55); }
.half { border-color: #dca9a3; background: rgba(220, 190, 190, .35); }
.tray { margin-left: auto; display: flex; align-items: center; color: #fff; font-size: 11.500px; padding-right: 25px; }
.tray > svg { width: 112px; height: 20px; margin-right: 12px; }
.lang { width: 38px; letter-spacing: -.1px; }
.clock { text-align: center; line-height: 17px; letter-spacing: -.3px; width: 60px; margin-top: 1px; }
</style>
